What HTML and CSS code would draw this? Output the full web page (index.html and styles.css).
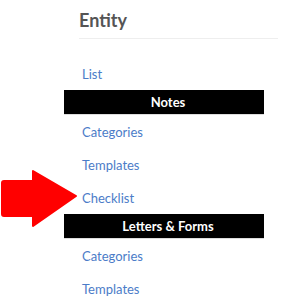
FILE: index.html
```html
<!DOCTYPE html>
<html lang="en">
<head>
  <meta charset="UTF-8">
  <title>Entity</title>
  <link rel="stylesheet" href="styles.css">
</head>
<body>
  <div class="panel">
    <h2 class="panel-title">Entity</h2>
    <ul class="menu">
      <li><a href="#">List</a></li>
      <li class="menu-head">Notes</li>
      <li><a href="#">Categories</a></li>
      <li><a href="#">Templates</a></li>
      <li><a href="#">Checklist</a></li>
      <li class="menu-head">Letters &amp; Forms</li>
      <li><a href="#">Categories</a></li>
      <li><a href="#">Templates</a></li>
    </ul>
  </div>
  <svg class="pointer" width="80" height="60" viewBox="0 0 80 60">
    <path d="M4 12 H33 V2 L76 27 L33 57 V47 H4 Q2 47 2 45 V14 Q2 12 4 12 Z" fill="#ff0000" stroke="#ff0000" stroke-width="2" stroke-linejoin="round"/>
  </svg>
</body>
</html>
```

FILE: styles.css
```css
body {
  font-family: Lato, "DejaVu Sans", sans-serif;
  margin: 0;
  padding: 0;
  background-color: #fff;
  position: relative;
}
.panel {
  padding: 0 7px 0 64px;
}
.panel-title {
  margin: 0 0 0 15px;
  height: 38px;
  line-height: 40px;
  font-size: 18px;
  font-weight: bold;
  color: #555;
  border-bottom: 1px solid #eee;
}
.menu {
  list-style: none;
  margin: 18px 0 0;
  padding: 0;
  width: 200px;
}
.menu li {
  height: 33px;
  line-height: 34px;
  font-size: 13px;
}
.menu a {
  color: #4b7cc8;
  text-decoration: none;
  padding-left: 18px;
}
.menu .menu-head {
  height: 24px;
  line-height: 25px;
  background-color: #000;
  color: #fff;
  font-weight: bold;
  text-align: center;
  padding-left: 8px;
  border-bottom: 1px solid #ddd;
}
.pointer {
  position: absolute;
  left: 0;
  top: 169px;
}
```
